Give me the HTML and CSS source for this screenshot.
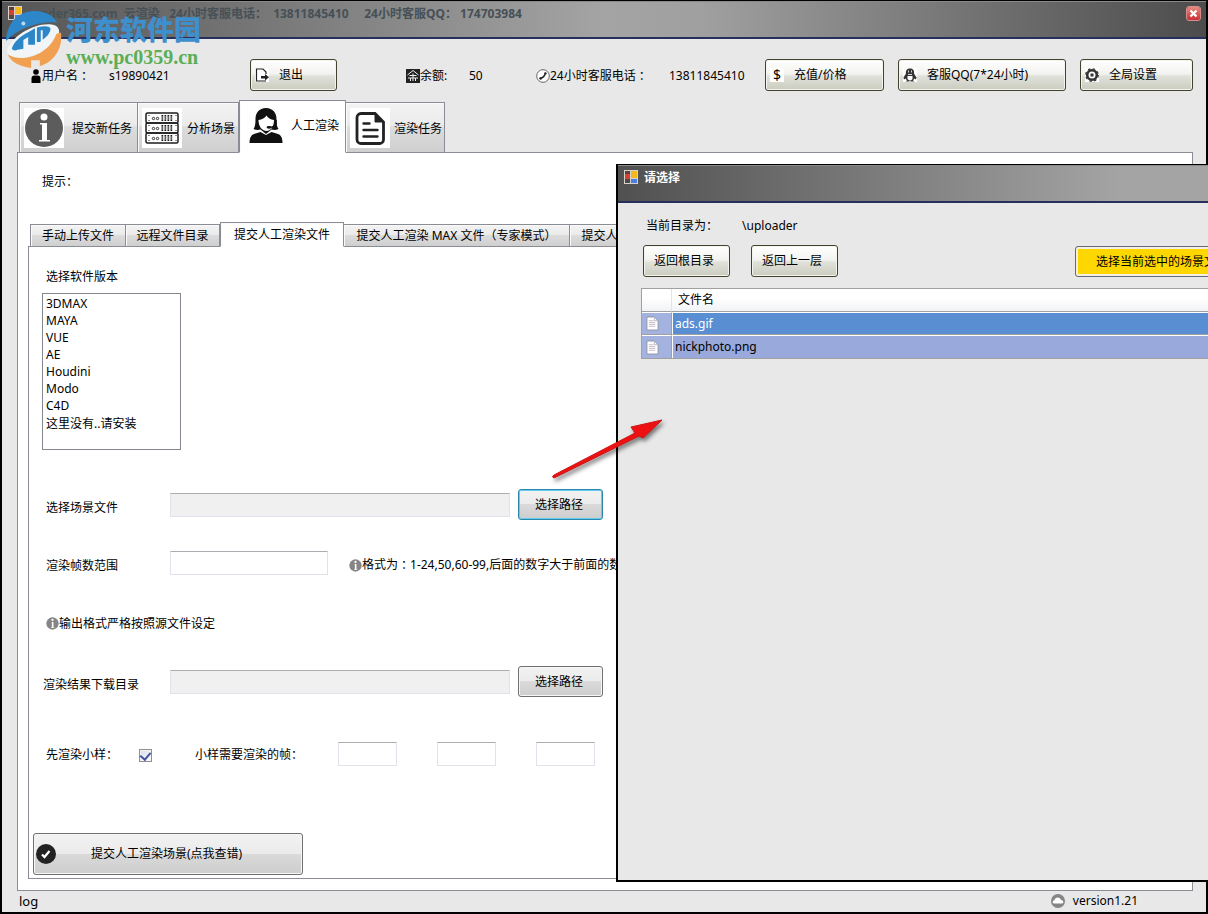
FILE: index.html
```html
<!DOCTYPE html>
<html lang="zh-CN">
<head>
<meta charset="utf-8">
<meta name="viewport" content="width=device-width, initial-scale=1">
<title>云渲染</title>
<link rel="stylesheet" href="styles.css">
</head>
<body>
<svg class="defs" width="0" height="0" aria-hidden="true">
  <symbol id="form-icon" viewBox="0 0 14 14">
    <path d="M0 0h14v14H0z" fill="#d8d2cc"/>
    <path d="M1 1h5v5H1z" fill="#5a4038"/><path d="M1 4h5v5H1z" fill="#d8402f"/>
    <path d="M7 1h6v7H7z" fill="#f4b81c"/><path d="M7 9h6v4H7z" fill="#4a7ee0"/>
    <path d="M1 9h5v4H1z" fill="#4b4b4b"/>
  </symbol>
  <symbol id="info-icon" viewBox="0 0 40 40">
    <circle cx="20" cy="20" r="19" fill="currentColor"/>
    <circle cx="20" cy="9" r="3.500" fill="#fff"/>
    <path d="M16 15h7v17h3v1.500H15V32h3V16.500h-2z" fill="#fff"/>
  </symbol>
  <symbol id="doc-icon" viewBox="0 0 14 16">
    <path d="M1 1h8l4 4v10H1z" fill="#fff" stroke="#8e93a8"/>
    <path d="M9 1v4h4" fill="none" stroke="#b5b8c6"/>
    <path d="M3 5h5M3 7h7M3 9h7M3 11h7" stroke="#c3b9c0"/>
  </symbol>
</svg>

<div class="window">
  <header class="titlebar">
    <svg class="form-icon"><use href="#form-icon"/></svg>
    <h1 class="title">render365.com&nbsp; 云渲染&nbsp;&nbsp; 24小时客服电话<span class="colon">：</span>&nbsp; 13811845410&nbsp;&nbsp;&nbsp;&nbsp; 24小时客服QQ<span class="colon">：</span>&nbsp;174703984</h1>
    <button class="close" type="button" aria-label="关闭"><svg viewBox="0 0 13 13"><path d="M3.500 3.500l6 6M9.500 3.500l-6 6" stroke="#fff" stroke-width="2.200"/></svg></button>
  </header>

  <div class="toolbar">
    <span class="field"><svg class="ico12" viewBox="0 0 10 14"><circle cx="5" cy="3" r="2.800"/><path d="M.5 14V9.500Q.5 6.500 3.500 6.500h3Q9.500 6.500 9.500 9.500V14z"/></svg>用户名<span class="colon">：</span></span>
    <span class="value">s19890421</span>
    <button class="glass" type="button">
      <svg class="ico14" viewBox="0 0 14 14"><path d="M0 0h14v14H0z" fill="#fff"/><path d="M11 6V4L8 1H1.500v12H11" fill="none" stroke="#222" stroke-width="1.200"/><path d="M6 8h4V6l4 3.200-4 3.200V10.500H6z" fill="#222"/></svg>
      <span>退出</span>
    </button>
    <i></i>
    <span class="field"><svg class="ico14" viewBox="0 0 14 14"><path d="M0 0h14v14H0z" fill="#222"/><path d="M7 1.500L1.500 6M7 1.500L12.500 6M3.500 6.500h7M7 4.500V12M2 9h10M4.500 9v3M9.500 9v3" stroke="#eee" fill="none"/></svg>余额:</span>
    <span class="value">50</span>
    <span class="field"><svg class="ico14" viewBox="0 0 14 14"><circle cx="7" cy="7" r="6.300" fill="#fff" stroke="#444" stroke-width=".8"/><path d="M4 9.500Q8.500 8.500 9.500 4" fill="none" stroke="#222" stroke-width="1.500"/><path d="M3.500 8.700l2 1.600M8.500 3.700l2 1" stroke="#222" stroke-width="1.800"/></svg>24小时客服电话<span class="colon">：</span></span>
    <span class="value">13811845410</span>
    <button class="glass" type="button">
      <span class="dollar">$</span>
      <span>充值/价格</span>
    </button>
    <i></i>
    <button class="glass" type="button">
      <svg class="ico14" viewBox="0 0 14 14"><path d="M0 0h14v14H0z" fill="#fff"/><path d="M7 .5C4 .5 2.500 2.500 3 5.500L.5 9.500l.5 2 1.500-1L4 12.500 2.500 13.500H6L7 13l1 .5h3.500L10 12.500l1.500-2 1.500 1 .5-2L11 5.500c.5-3-1-5-4-5z" fill="#333"/><path d="M4.500 8h5v3q-2.500 3-5 0z" fill="#fff"/><path d="M5.500 2.500v2M8.500 2.500v2M5 6.500h4" stroke="#fff" stroke-width=".8"/></svg>
      <span>客服QQ(7*24小时)</span>
    </button>
    <i></i>
    <button class="glass" type="button">
      <svg class="ico14" viewBox="0 0 14 14"><path d="M0 0h14v14H0z" fill="#fff"/><circle cx="7" cy="7" r="4.800" fill="none" stroke="#333" stroke-width="2.600"/><circle cx="7" cy="7" r="6.300" fill="none" stroke="#333" stroke-width="1.200" stroke-dasharray="2.500 2.450"/><path d="M5.500 5.500h3v3h-3z" fill="#333"/></svg>
      <span>全局设置</span>
    </button>
  </div>

  <nav class="tabs main-tabs">
    <button class="tab tab-a" type="button"><svg class="ico40 grey" viewBox="0 0 40 40"><use href="#info-icon"/></svg><span>提交新任务</span></button>
    <button class="tab tab-b" type="button">
      <svg class="ico40" viewBox="0 0 40 40" fill="none" stroke="#1c1c1c">
        <g stroke-width="1.500"><rect x="4" y="5" width="32" height="10" rx="1.500"/><rect x="4" y="15" width="32" height="10" rx="1.500"/><rect x="4" y="25" width="32" height="10" rx="1.500"/></g>
        <g stroke-width="6" stroke-dasharray="1.700 1.300"><path d="M19.500 10h12M19.500 20h12M19.500 30h12"/></g>
        <g stroke="#fff" stroke-width=".6"><path d="M19 9h14M19 11h14M19 19h14M19 21h14M19 29h14M19 31h14"/></g>
        <g stroke-width=".9"><circle cx="11.500" cy="10.500" r="1.200"/><circle cx="15.500" cy="10.500" r="1.200"/><circle cx="11.500" cy="20.500" r="1.200"/><circle cx="15.500" cy="20.500" r="1.200"/><circle cx="11.500" cy="30.500" r="1.200"/><circle cx="15.500" cy="30.500" r="1.200"/></g>
        <path d="M7 7v6M7 17v6M7 27v6M34 7v6M34 17v6M34 27v6" stroke-dasharray="1 4"/>
      </svg><span>分析场景</span></button>
    <button class="tab tab-c active" type="button">
      <svg class="ico40" viewBox="0 0 40 40"><path d="M3.500 38c0-6 2-8.500 6-9.500l5-1.500 5.500 3 5.500-3 5 1.500c4 1 6 3.500 6 9.500z" fill="#111"/><path d="M20 3C13 3 9.500 8 9.500 14c0 5-.5 8-2 10 2 1 4.500 1.300 7 .5l5.500 4.500 5.500-4.500c2.500.8 5 .5 7-.5-1.500-2-2-5-2-10 0-6-3.500-11-10.500-11z" fill="#111"/><path d="M12.500 15c3.500-.5 6.500-2 8-4.500 1.500 2.500 4 4 7.500 4.500 0 7-3.500 11-7.500 11s-8-4-8-11z" fill="#fff"/><path d="M30 15v4q-1 3-7 3.500" fill="none" stroke="#111" stroke-width="1.500"/><ellipse cx="23" cy="22.300" rx="2.500" ry="1.400" fill="#111"/></svg><span>人工渲染</span></button>
    <button class="tab tab-d" type="button">
      <svg class="ico40" viewBox="0 0 40 40" fill="none" stroke="#222" stroke-width="2.800"><path d="M11 5.500h14l8.500 8.500v17.500a4 4 0 0 1-4 4H11a4 4 0 0 1-4-4v-22a4 4 0 0 1 4-4z"/><path d="M25 5v9h9z" fill="#222" stroke-width="1"/><path d="M13.500 15.500h6M13.500 22h14M13.500 28.500h14" stroke-linecap="round" stroke-width="2.400"/></svg><span>渲染任务</span></button>
  </nav>

  <main class="panel">
    <p class="tip">提示<span class="colon">：</span></p>
    <nav class="tabs sub-tabs">
      <button class="tab sub-a" type="button">手动上传文件</button>
      <button class="tab sub-b" type="button">远程文件目录</button>
      <button class="tab sub-c active" type="button">提交人工渲染文件</button>
      <button class="tab sub-d" type="button">提交人工渲染 MAX 文件（专家模式）</button>
      <button class="tab sub-e" type="button">提交人工渲染</button>
    </nav>
    <form class="form">
      <label class="list-label" for="software">选择软件版本</label>
      <select class="software" id="software" size="8">
        <option>3DMAX</option><option>MAYA</option><option>VUE</option><option>AE</option><option>Houdini</option><option>Modo</option><option>C4D</option><option>这里没有..请安装</option>
      </select>

      <div class="row scene">
        <label class="name" for="scene">选择场景文件</label>
        <input class="box wide" id="scene" type="text" readonly>
        <button class="grey-btn focused" type="button">选择路径</button>
      </div>
      <div class="row frames">
        <label class="name" for="frames">渲染帧数范围</label>
        <input class="box medium" id="frames" type="text">
        <span class="note hint"><svg class="info"><use href="#info-icon"/></svg>格式为<span class="colon">：</span>1-24,50,60-99,后面的数字大于前面的数字</span>
      </div>
      <div class="row output">
        <span class="note"><svg class="info"><use href="#info-icon"/></svg>输出格式严格按照源文件设定</span>
      </div>
      <div class="row result">
        <label class="name" for="result">渲染结果下载目录</label>
        <input class="box wide" id="result" type="text" readonly>
        <button class="grey-btn" type="button">选择路径</button>
      </div>
      <div class="row sample">
        <label class="check-label" for="sample">先渲染小样<span class="colon">：</span></label>
        <input class="check" id="sample" type="checkbox" checked>
        <label class="frame-label" for="frame1">小样需要渲染的帧<span class="colon">：</span></label>
        <span class="frame-boxes">
          <input class="box small" id="frame1" type="text">
          <input class="box small" type="text" aria-label="帧 2">
          <input class="box small" type="text" aria-label="帧 3">
        </span>
      </div>
      <button class="grey-btn submit" type="button">
        <svg class="ico20" viewBox="0 0 20 20"><circle cx="10" cy="10" r="10" fill="#222"/><path d="M6 10.500l2.500 2.500 5-6" fill="none" stroke="#fff" stroke-width="2.200"/></svg>
        <span>提交人工渲染场景(点我查错)</span>
      </button>
    </form>
  </main>

  <footer class="status">
    <span>log</span>
    <span class="version"><svg class="ico14" viewBox="0 0 14 14"><circle cx="7" cy="7" r="7" fill="#858585"/><path d="M3 9.500q-1.500-.3-1.300-1.800Q2 6.300 3.500 6.300 4 3.500 7 3.500q2.500 0 3 2.500 2 0 2.300 1.800.2 1.500-1.300 1.700z" fill="#fff"/></svg>version1.21</span>
  </footer>
</div>

<section class="dialog" aria-label="请选择">
  <header class="titlebar dialog-bar">
    <svg class="form-icon"><use href="#form-icon"/></svg>
    <h2 class="title">请选择</h2>
  </header>
  <div class="dialog-body">
    <p class="path"><span>当前目录为<span class="colon">：</span></span><span>\uploader</span></p>
    <div class="actions">
      <button class="glass nav-btn" type="button">返回根目录</button>
      <button class="glass nav-btn" type="button">返回上一层</button>
      <button class="yellow" type="button">选择当前选中的场景文件</button>
    </div>
    <table class="files">
      <thead><tr><th class="mark"></th><th>文件名</th></tr></thead>
      <tbody>
        <tr class="selected"><td class="mark"><svg><use href="#doc-icon"/></svg></td><td>ads.gif</td></tr>
        <tr><td class="mark"><svg><use href="#doc-icon"/></svg></td><td>nickphoto.png</td></tr>
      </tbody>
    </table>
  </div>
</section>

<svg class="arrow" viewBox="0 0 124 74" aria-hidden="true">
  <path d="M6 61L87 19 83 13 114 6 95 24 91 22 6 64Q3 63 6 61z" fill="#ee1111" stroke="#cc1414" stroke-width="1"/>
</svg>

<div class="watermark">
  <svg class="wm-logo" viewBox="0 0 60 60" aria-hidden="true">
    <path d="M1 32C2 12 15 1 31 1c10 0 19 4 23 12C38 11 14 18 1 32z" fill="#2c86c8"/>
    <path d="M2 42C6 28 30 13 48 15c10 1 10 10 4 18-8 10-29 18-41 16-6-1-9-3-9-7z" fill="#f1f5f8"/>
    <path d="M7 40c2-7 9-13 17-17l7-4v17h-7v-8l-5 3v9l-6 1q-4 2-6-1z" fill="#2c86c8"/>
    <path d="M33 18q12-3 14 1 1 6-11 14h-3z" fill="#2c86c8"/><path d="M37 21h2v11h-2zM21 31h2v7h-2z" fill="#f1f5f8"/>
    <path d="M3 46c14 9 42 1 50-21 2-1 4-2 5-1 2 18-10 31-22 34v-6h-9v8C15 58 6 54 3 46z" fill="#f0a050"/>
    <circle cx="19" cy="14" r="2" fill="#b8dcf3"/>
  </svg>
  <p class="wm-text"><b class="wm-name">河东软件园</b><b class="wm-url">www.pc0359.cn</b></p>
</div>
</body>
</html>
```

FILE: styles.css
```css
* { box-sizing: border-box; }

body {
  margin: 0;
  position: relative;
  min-height: 100vh;
  overflow: hidden;
  font: 12px/18px "Noto Sans", "Noto Sans CJK SC", sans-serif;
  color: #000;
}

button, input, select { font: inherit; color: inherit; margin: 0; }
p, h1, h2 { margin: 0; }
svg { flex: none; }
.defs { position: absolute; }
.colon { font-family: "Noto Sans CJK TC", sans-serif; line-height: 1; }

.ico12 { width: 12px; height: 14px; }
.ico14 { width: 14px; height: 14px; }
.ico20 { width: 20px; height: 20px; }
.ico40 { width: 40px; height: 40px; background: #fff; }
.info { width: 13px; height: 13px; color: #858585; }
.grey { color: #5c5c5c; }

/* main window */
.window {
  display: flex;
  flex-direction: column;
  min-height: 100vh;
  border: 2px solid #000;
  border-top-width: 1px;
  background: #e8e8e8;
}

.titlebar {
  display: flex;
  align-items: flex-start;
  height: 38px;
  padding: 4px 6px;
  border-top: 1px solid #8a8a8a;
  border-bottom: 2px solid #26305a;
  background: linear-gradient(90deg, #555, #a4a4a4 50%, #a0a0a0 58%, #4c4c4c);
}
.form-icon { width: 14px; height: 14px; }
.title {
  flex: 1;
  margin-left: 6px;
  font-size: 12px;
  line-height: 16px;
  font-weight: bold;
  color: #465057;
  white-space: nowrap;
}
.close {
  width: 13px;
  height: 13px;
  margin-top: 1px;
  padding: 0;
  border: 0;
  border-radius: 2px;
  background: linear-gradient(#e58a80, #cc2f35);
  outline: 1px solid #d98b8b;
}
.close svg { display: block; }

.toolbar {
  display: grid;
  grid-template-columns: 79px 141px 87px 1fr 63px 67px 133px 96px 119px 14px 168px 14px 113px;
  align-items: center;
  padding: 20px 13px 9px 28px;
  white-space: nowrap;
}
.field { display: flex; align-items: center; padding-top: 1px; }
.value { padding-top: 1px; }

.glass {
  display: flex;
  align-items: center;
  height: 32px;
  padding: 0 4px;
  border: 1px solid #45412f;
  border-radius: 3px;
  background: linear-gradient(#fff, #f3f4f1 45%, #dfe1d9 55%, #cbccbf);
  box-shadow: inset 0 0 0 1px #f4f4ee;
  text-align: left;
  white-space: nowrap;
}
.glass svg + span, .dollar + span { margin-left: 10px; }
.dollar { width: 14px; background: #fff; text-align: center; line-height: 14px; font-size: 14px; }

/* tabs */
.tabs { display: flex; align-items: flex-end; }
.tab {
  display: flex;
  align-items: center;
  border: 1px solid #8b8d94;
  border-left-width: 0;
  background: linear-gradient(#f3f3f3, #ebebeb 45%, #dcdcdc 50%, #cfcfcf);
  box-shadow: inset 1px 1px 0 #fafafa;
  white-space: nowrap;
}
.tab:first-child { border-left-width: 1px; }
.tab.active { border-left-width: 1px; border-bottom-color: #fff; background: #fff; }

.main-tabs { position: relative; z-index: 1; margin: 0 0 -1px 17px; }
.main-tabs .tab { height: 51px; padding: 0 4px; gap: 8px; }
.main-tabs .tab span { padding-top: 2px; }
.main-tabs .tab.active { height: 53px; padding: 0 6px 3px; gap: 5px; }
.main-tabs .tab-a { width: 119px; }
.main-tabs .tab-b { width: 101px; gap: 5px; }
.main-tabs .tab-c { width: 107px; }
.main-tabs .tab-d { width: 99px; gap: 4px; }

.panel {
  flex: 1;
  display: flex;
  flex-direction: column;
  margin: 0 13px 0 15px;
  padding: 20px 10px 11px;
  border: 1px solid #8b8d94;
  background: #fff;
}
.tip { margin: 0 0 31px 14px; }

.sub-tabs { position: relative; z-index: 1; margin: 0 0 -1px 2px; overflow: hidden; }
.sub-tabs .tab { flex: none; justify-content: center; height: 23px; padding: 0; }
.sub-tabs .tab.active { height: 25px; }
.sub-tabs .sub-a { width: 96px; }
.sub-tabs .sub-b { width: 94px; }
.sub-tabs .sub-c { width: 124px; }
.sub-tabs .sub-d { width: 226px; }
.sub-tabs .sub-e { width: 96px; }

/* form */
.form {
  flex: 1;
  display: flex;
  flex-direction: column;
  align-items: flex-start;
  padding: 21px 4px 3px;
  border: 1px solid #8b8d94;
}
.list-label { margin-left: 13px; }
.software {
  width: 139px;
  height: 157px;
  margin: 7px 0 0 9px;
  padding: 1px;
  border: 1px solid #828790;
  border-radius: 0;
  background: #fff;
  outline: 0;
  overflow: hidden;
}
.software option { min-height: 17px; height: 17px; padding: 0 2px; line-height: 17px; }

.row { display: flex; align-items: center; height: 31px; padding-left: 13px; white-space: nowrap; }
.scene { margin-top: 39px; }
.frames { margin-top: 27px; }
.output { margin-top: 30px; }
.result { margin-top: 27px; }
.sample { margin-top: 41px; }
.name { width: 124px; padding-top: 7px; }
.result { padding-left: 10px; }
.result .name { width: 127px; }
.note { display: flex; align-items: center; }
.hint { margin-left: 21px; padding-top: 5px; }
.check-label { width: 92px; padding-top: 2px; }
.frame-label { width: 143px; padding-top: 2px; }

.box {
  height: 24px;
  padding: 1px 4px;
  border: 1px solid #e2e3ea;
  border-top-color: #abadb3;
  background: #fff;
}
.box[readonly] { background: #f0f0f0; }
.wide { width: 340px; margin-right: 8px; }
.medium { width: 158px; }
.small { width: 59px; }
.frame-boxes { display: flex; gap: 40px; }

.check {
  appearance: none;
  display: grid;
  place-items: center;
  width: 13px;
  height: 13px;
  margin: 3px 43px 0 1px;
  border: 1px solid #8e8f8f;
  background: linear-gradient(135deg, #d5dae4, #fff);
  box-shadow: inset 0 0 0 1px #f4f4f4;
}
.check:checked::after {
  content: "";
  width: 5px;
  height: 8px;
  margin-bottom: 2px;
  border: solid #40559c;
  border-width: 0 2px 2px 0;
  transform: rotate(40deg);
}

.grey-btn {
  width: 85px;
  height: 31px;
  padding: 0 3px 0 0;
  border: 1px solid #707070;
  border-radius: 3px;
  background: linear-gradient(#f2f2f2, #ebebeb 50%, #dadada 50%, #cdcdcd);
  box-shadow: inset 0 0 0 1px #f6f6f6;
}
.grey-btn.focused { border-color: #2c86ab; box-shadow: inset 0 0 0 1px #62cdf0; }
.submit {
  display: flex;
  align-items: center;
  gap: 35px;
  width: 270px;
  height: 42px;
  margin-top: auto;
  padding: 0 2px;
}

.status {
  display: flex;
  justify-content: space-between;
  align-items: center;
  height: 21px;
  padding: 0 68px 2px 17px;
  font-size: 13px;
}
.version { display: flex; align-items: center; gap: 8px; font-size: 12px; }

/* file dialog, floating over the main window */
.dialog {
  position: absolute;
  z-index: 2;
  left: 616px;
  right: 0;
  top: 164px;
  height: 718px;
  overflow: hidden;
  border: solid #000;
  border-width: 1px 0 2px 2px;
  background: #e8e8e8;
}
.dialog-bar { background: linear-gradient(90deg, #505050, #a4a4a4 85%); }
.dialog-bar .title { color: #fff; }
.dialog-body { padding: 14px 0 0 23px; }
.path { display: flex; gap: 24px; padding-left: 5px; }
.actions { display: flex; margin: 10px 0 11px 2px; }
.nav-btn { flex: none; width: 87px; margin-right: 21px; padding: 0 10px; }
.yellow {
  flex: none;
  height: 31px;
  width: 180px;
  margin: 1px -47px 0 auto;
  padding: 0 20px;
  border: 1px solid #666a80;
  border-radius: 3px;
  background: #ffd700;
  box-shadow: inset 0 0 0 2px #f4efe0;
  text-align: left;
  white-space: nowrap;
}

.files { width: 100%; border-collapse: separate; border-spacing: 0; border: 1px solid #a0a0a0; border-right: 0; }
.files th {
  height: 23px;
  padding: 0 6px;
  border-bottom: 1px solid #a0a0a0;
  background: linear-gradient(#fff 40%, #f1f3f6);
  font-weight: normal;
  text-align: left;
}
.files td { height: 23px; padding: 0 2px; background: #99a9dc; border-top: 1px solid #fff; border-left: 1px solid #fff; }
.files .selected td { background: #598ed3; color: #fff; border-bottom: 1px solid #a0a0a0; }
.files .mark, .files .selected .mark { width: 30px; padding: 0 4px; border-left: 0; border-right: 1px solid #a0a0a0; }
.files td.mark, .files .selected td.mark { background: #a3b2de; }
.files th.mark { border-right-color: #e2e4ea; }
.mark svg { display: block; width: 13px; height: 15px; }

/* annotation arrow */
.arrow {
  position: absolute;
  z-index: 3;
  left: 548px;
  top: 414px;
  width: 124px;
  height: 74px;
  filter: drop-shadow(2px 3px 2px rgba(0, 0, 0, .5));
}

/* site watermark */
.watermark { position: absolute; z-index: 4; left: 5px; top: 10px; display: flex; pointer-events: none; }
.wm-logo { width: 58px; height: 58px; }
.wm-text { display: flex; flex-direction: column; margin: 3px 0 0 3px; }
.wm-name { font: 900 27px/32px "Noto Sans CJK SC", sans-serif; color: #3e8fce; }
.wm-url { font: bold 20px/24px "Liberation Serif", serif; color: #5aae55; }
```
